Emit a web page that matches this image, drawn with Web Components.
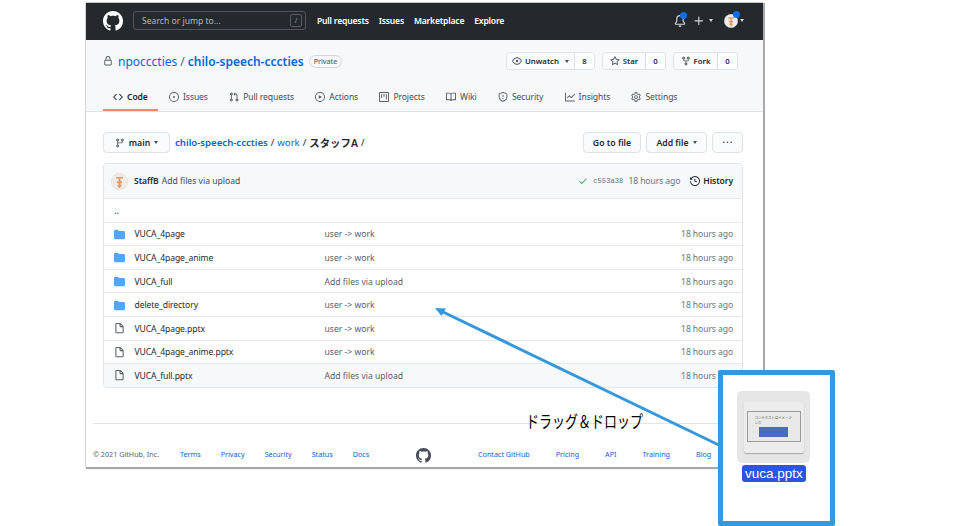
<!DOCTYPE html>
<html lang="ja">
<head>
<meta charset="utf-8">
<title>work / スタッフA</title>
<style>
  html, body { margin: 0; background: #fff; }
  body { width: 960px; height: 526px; overflow: hidden; position: relative; font-family: "Noto Sans", "Noto Sans CJK JP", sans-serif; }
</style>
</head>
<body>
<gh-window></gh-window>
<drag-arrow></drag-arrow>
<drag-card name="vuca.pptx"></drag-card>

<script>
const ICONS = {
  logo: 'M8 0C3.58 0 0 3.58 0 8c0 3.54 2.29 6.53 5.47 7.59.4.07.55-.17.55-.38 0-.19-.01-.82-.01-1.49-2.01.37-2.53-.49-2.69-.94-.09-.23-.48-.94-.82-1.13-.28-.15-.68-.52-.01-.53.63-.01 1.08.58 1.23.82.72 1.21 1.87.87 2.33.66.07-.52.28-.87.51-1.07-1.78-.2-3.64-.89-3.64-3.95 0-.87.31-1.59.82-2.15-.08-.2-.36-1.02.08-2.12 0 0 .67-.21 2.2.82.64-.18 1.32-.27 2-.27.68 0 1.36.09 2 .27 1.53-1.04 2.2-.82 2.2-.82.44 1.1.16 1.92.08 2.12.51.56.82 1.27.82 2.15 0 3.07-1.87 3.75-3.65 3.95.29.25.54.73.54 1.48 0 1.07-.01 1.93-.01 2.2 0 .21.15.46.55.38A8.013 8.013 0 0016 8c0-4.42-3.58-8-8-8z',
  folder: 'M1.75 1A1.75 1.75 0 000 2.75v10.5C0 14.216.784 15 1.75 15h12.5A1.75 1.75 0 0016 13.25v-8.5A1.75 1.75 0 0014.25 3H7.5a.25.25 0 01-.2-.1l-.9-1.2C6.07 1.26 5.55 1 5 1H1.75z',
  file: 'M3.75 1.5a.25.25 0 00-.25.25v11.5c0 .138.112.25.25.25h8.5a.25.25 0 00.25-.25V6H9.75A1.75 1.75 0 018 4.25V1.5H3.75zm5.75.56v2.19c0 .138.112.25.25.25h2.19L9.5 2.06zM2 1.75C2 .784 2.784 0 3.75 0h5.086c.464 0 .909.184 1.237.513l3.414 3.414c.329.328.513.773.513 1.237v8.086A1.75 1.75 0 0112.25 15h-8.5A1.75 1.75 0 012 13.25V1.75z',
  lock: 'M4 4v2h-.25A1.75 1.75 0 002 7.75v5.5c0 .966.784 1.75 1.75 1.75h8.5A1.75 1.75 0 0014 13.25v-5.5A1.75 1.75 0 0012.25 6H12V4a4 4 0 10-8 0zm6.5 2V4a2.5 2.5 0 00-5 0v2h5zM12 7.5h.25a.25.25 0 01.25.25v5.5a.25.25 0 01-.25.25h-8.5a.25.25 0 01-.25-.25v-5.5a.25.25 0 01.25-.25H12z',
  code: 'M4.72 3.22a.75.75 0 011.06 1.06L2.06 8l3.72 3.72a.75.75 0 11-1.06 1.06L.47 8.53a.75.75 0 010-1.06l4.25-4.25zm6.56 0a.75.75 0 10-1.06 1.06L13.94 8l-3.72 3.72a.75.75 0 101.06 1.06l4.25-4.25a.75.75 0 000-1.06l-4.25-4.25z',
  issue: 'M8 9.5a1.5 1.5 0 100-3 1.5 1.5 0 000 3z M8 0a8 8 0 100 16A8 8 0 008 0zM1.5 8a6.5 6.5 0 1113 0 6.5 6.5 0 01-13 0z',
  pull: 'M7.177 3.073L9.573.677A.25.25 0 0110 .854v4.792a.25.25 0 01-.427.177L7.177 3.427a.25.25 0 010-.354zM3.75 2.5a.75.75 0 100 1.5.75.75 0 000-1.5zm-2.25.75a2.25 2.25 0 113 2.122v5.256a2.251 2.251 0 11-1.5 0V5.372A2.25 2.25 0 011.5 3.25zM11 2.5h-1V4h1a1 1 0 011 1v5.628a2.251 2.251 0 101.5 0V5A2.5 2.5 0 0011 2.5zm1 10.25a.75.75 0 111.5 0 .75.75 0 01-1.5 0zM3.75 12a.75.75 0 100 1.5.75.75 0 000-1.5z',
  play: 'M1.5 8a6.5 6.5 0 1113 0 6.5 6.5 0 01-13 0zM8 0a8 8 0 100 16A8 8 0 008 0zM6.379 5.227A.25.25 0 006 5.442v5.117a.25.25 0 00.379.214l4.264-2.559a.25.25 0 000-.428L6.379 5.227z',
  project: 'M1.75 0A1.75 1.75 0 000 1.75v12.5C0 15.216.784 16 1.75 16h12.5A1.75 1.75 0 0016 14.25V1.75A1.75 1.75 0 0014.25 0H1.75zM1.5 1.75a.25.25 0 01.25-.25h12.5a.25.25 0 01.25.25v12.5a.25.25 0 01-.25.25H1.75a.25.25 0 01-.25-.25V1.75zM11.75 3a.75.75 0 00-.75.75v7.5a.75.75 0 001.5 0v-7.5a.75.75 0 00-.75-.75zm-8.25.75a.75.75 0 011.5 0v5.5a.75.75 0 01-1.5 0v-5.5zM8 3a.75.75 0 00-.75.75v3.5a.75.75 0 001.5 0v-3.5A.75.75 0 008 3z',
  book: 'M0 1.75A.75.75 0 01.75 1h4.253c1.227 0 2.317.59 3 1.501A3.744 3.744 0 0111.006 1h4.245a.75.75 0 01.75.75v10.5a.75.75 0 01-.75.75h-4.507a2.25 2.25 0 00-1.591.659l-.622.621a.75.75 0 01-1.06 0l-.622-.621A2.25 2.25 0 005.258 13H.75a.75.75 0 01-.75-.75V1.75zm8.755 3a2.25 2.25 0 012.25-2.25H14.5v9h-3.757c-.71 0-1.4.201-1.992.572l.004-7.322zm-1.504 7.324l.004-5.073-.002-2.253A2.25 2.25 0 005.003 2.5H1.5v9h3.757a3.75 3.75 0 011.994.574z',
  shield: 'M7.467.133a1.75 1.75 0 011.066 0l5.25 1.68A1.75 1.75 0 0115 3.48V7c0 1.566-.32 3.182-1.303 4.682-.983 1.498-2.585 2.813-5.032 3.855a1.7 1.7 0 01-1.33 0c-2.447-1.042-4.049-2.357-5.032-3.855C1.32 10.182 1 8.566 1 7V3.48a1.75 1.75 0 011.217-1.667l5.25-1.68zm.61 1.429a.25.25 0 00-.153 0l-5.25 1.68a.25.25 0 00-.174.238V7c0 1.358.275 2.666 1.057 3.86.784 1.194 2.121 2.34 4.366 3.297a.2.2 0 00.154 0c2.245-.956 3.582-2.104 4.366-3.298C13.225 9.666 13.5 8.36 13.5 7V3.48a.25.25 0 00-.174-.237l-5.25-1.68zM9 10.5a1 1 0 11-2 0 1 1 0 012 0zm-.25-5.75a.75.75 0 10-1.5 0v3a.75.75 0 001.5 0v-3z',
  graph: 'M1.5 1.75a.75.75 0 00-1.5 0v12.5c0 .414.336.75.75.75h14.5a.75.75 0 000-1.5H1.5V1.75zm14.28 2.53a.75.75 0 00-1.06-1.06L10 7.94 7.53 5.47a.75.75 0 00-1.06 0L3.22 8.72a.75.75 0 001.06 1.06L7 7.06l2.47 2.47a.75.75 0 001.06 0l5.25-5.25z',
  gear: 'M7.429 1.525a6.593 6.593 0 011.142 0c.036.003.108.036.137.146l.289 1.105c.147.56.55.967.997 1.189.174.086.341.183.501.29.417.278.97.423 1.53.27l1.102-.303c.11-.03.175.016.195.046.219.31.41.641.573.989.014.031.022.11-.059.19l-.815.806c-.411.406-.562.957-.53 1.456a4.588 4.588 0 010 .582c-.032.499.119 1.05.53 1.456l.815.806c.08.08.073.159.059.19a6.494 6.494 0 01-.573.99c-.02.029-.086.074-.195.045l-1.103-.303c-.559-.153-1.112-.008-1.529.27-.16.107-.327.204-.5.29-.449.222-.851.628-.998 1.189l-.289 1.105c-.029.11-.101.143-.137.146a6.613 6.613 0 01-1.142 0c-.036-.003-.108-.037-.137-.146l-.289-1.105c-.147-.56-.55-.967-.997-1.189a4.502 4.502 0 01-.501-.29c-.417-.278-.97-.423-1.53-.27l-1.102.303c-.11.03-.175-.016-.195-.046a6.492 6.492 0 01-.573-.989c-.014-.031-.022-.11.059-.19l.815-.806c.411-.406.562-.957.53-1.456a4.587 4.587 0 010-.582c.032-.499-.119-1.05-.53-1.456l-.815-.806c-.08-.08-.073-.159-.059-.19a6.44 6.44 0 01.573-.99c.02-.029.086-.075.195-.045l1.103.303c.559.153 1.112.008 1.529-.27.16-.107.327-.204.5-.29.449-.222.851-.628.998-1.189l.289-1.105c.029-.11.101-.143.137-.146zM8 0c-.236 0-.47.01-.701.03-.743.065-1.29.615-1.458 1.261l-.29 1.106c-.017.066-.078.158-.211.224a5.994 5.994 0 00-.668.386c-.123.082-.233.09-.3.071L3.27 2.776c-.644-.177-1.392.02-1.82.63a7.977 7.977 0 00-.704 1.217c-.315.675-.111 1.422.363 1.891l.815.806c.05.048.098.147.088.294a6.084 6.084 0 000 .772c.01.147-.038.246-.088.294l-.815.806c-.474.469-.678 1.216-.363 1.891.2.428.436.835.704 1.218.428.609 1.176.806 1.82.63l1.103-.303c.066-.019.176-.011.299.071.213.143.436.272.668.386.133.066.194.158.212.224l.289 1.106c.169.646.715 1.196 1.458 1.26a8.094 8.094 0 001.402 0c.743-.064 1.29-.614 1.458-1.26l.29-1.106c.017-.066.078-.158.211-.224a5.98 5.98 0 00.668-.386c.123-.082.233-.09.3-.071l1.102.302c.644.177 1.392-.02 1.82-.63.268-.382.505-.789.704-1.217.315-.675.111-1.422-.364-1.891l-.814-.806c-.05-.048-.098-.147-.088-.294a6.1 6.1 0 000-.772c-.01-.147.039-.246.088-.294l.814-.806c.475-.469.679-1.216.364-1.891a7.992 7.992 0 00-.704-1.218c-.428-.609-1.176-.806-1.82-.63l-1.103.303c-.066.019-.176.011-.299-.071a5.991 5.991 0 00-.668-.386c-.133-.066-.194-.158-.212-.224L10.16 1.29C9.99.645 9.444.095 8.701.031A8.094 8.094 0 008 0zm1.5 8a1.5 1.5 0 11-3 0 1.5 1.5 0 013 0zM11 8a3 3 0 11-6 0 3 3 0 016 0z',
  eye: 'M1.679 7.932c.412-.621 1.242-1.75 2.366-2.717C5.175 4.242 6.527 3.5 8 3.5c1.473 0 2.824.742 3.955 1.715 1.124.967 1.954 2.096 2.366 2.717a.119.119 0 010 .136c-.412.621-1.242 1.75-2.366 2.717C10.825 11.758 9.473 12.5 8 12.5c-1.473 0-2.824-.742-3.955-1.715C2.92 9.818 2.09 8.69 1.679 8.068a.119.119 0 010-.136zM8 2c-1.981 0-3.67.992-4.933 2.078C1.797 5.169.88 6.423.43 7.1a1.619 1.619 0 000 1.798c.45.678 1.367 1.932 2.637 3.024C4.329 13.008 6.019 14 8 14c1.981 0 3.67-.992 4.933-2.078 1.27-1.091 2.187-2.345 2.637-3.023a1.619 1.619 0 000-1.798c-.45-.678-1.367-1.932-2.637-3.023C11.671 2.992 9.981 2 8 2zm0 8a2 2 0 100-4 2 2 0 000 4z',
  star: 'M8 .25a.75.75 0 01.673.418l1.882 3.815 4.21.612a.75.75 0 01.416 1.279l-3.046 2.97.719 4.192a.75.75 0 01-1.088.791L8 12.347l-3.766 1.98a.75.75 0 01-1.088-.79l.72-4.194L.818 6.374a.75.75 0 01.416-1.28l4.21-.611L7.327.668A.75.75 0 018 .25zm0 2.445L6.615 5.5a.75.75 0 01-.564.41l-3.097.45 2.24 2.184a.75.75 0 01.216.664l-.528 3.084 2.769-1.456a.75.75 0 01.698 0l2.77 1.456-.53-3.084a.75.75 0 01.216-.664l2.24-2.183-3.096-.45a.75.75 0 01-.564-.41L8 2.694v.001z',
  fork: 'M5 3.25a.75.75 0 11-1.5 0 .75.75 0 011.5 0zm0 2.122a2.25 2.25 0 10-1.5 0v.878A2.25 2.25 0 005.75 8.5h1.5v2.128a2.251 2.251 0 101.5 0V8.5h1.5a2.25 2.25 0 002.25-2.25v-.878a2.25 2.25 0 10-1.5 0v.878a.75.75 0 01-.75.75h-4.5A.75.75 0 015 6.25v-.878zm3.75 7.378a.75.75 0 11-1.5 0 .75.75 0 011.5 0zm3-8.75a.75.75 0 100-1.5.75.75 0 000 1.5z',
  branch: 'M11.75 2.5a.75.75 0 100 1.5.75.75 0 000-1.5zm-2.25.75a2.25 2.25 0 113 2.122V6A2.5 2.5 0 0110 8.5H6a1 1 0 00-1 1v1.128a2.251 2.251 0 11-1.5 0V5.372a2.25 2.25 0 111.5 0v1.836A2.492 2.492 0 016 7h4a1 1 0 001-1v-.628A2.25 2.25 0 019.5 3.25zM4.25 12a.75.75 0 100 1.5.75.75 0 000-1.5zM3.5 3.25a.75.75 0 111.5 0 .75.75 0 01-1.5 0z',
  history: 'M1.643 3.143L.427 1.927A.25.25 0 000 2.104V5.75c0 .138.112.25.25.25h3.646a.25.25 0 00.177-.427L2.715 4.215a6.5 6.5 0 11-1.18 4.458.75.75 0 10-1.493.154 8.001 8.001 0 101.6-5.684zM7.75 4a.75.75 0 01.75.75v2.992l2.028.812a.75.75 0 01-.557 1.392l-2.5-1A.75.75 0 017 8.25v-3.5A.75.75 0 017.75 4z',
  check: 'M13.78 4.22a.75.75 0 010 1.06l-7.25 7.25a.75.75 0 01-1.06 0L2.22 9.28a.75.75 0 011.06-1.06L6 10.94l6.72-6.72a.75.75 0 011.06 0z',
  bell: 'M8 16a2 2 0 001.985-1.75c.017-.137-.097-.25-.235-.25h-3.5c-.138 0-.252.113-.235.25A2 2 0 008 16z M3 5a5 5 0 0110 0v2.947c0 .05.015.098.042.139l1.703 2.555A1.518 1.518 0 0113.482 13H2.518a1.518 1.518 0 01-1.263-2.36l1.703-2.554A.25.25 0 003 7.947V5zm5-3.5A3.5 3.5 0 004.5 5v2.947c0 .346-.102.683-.294.97l-1.703 2.556a.018.018 0 00-.003.01l.001.006c0 .002.002.004.004.006a.017.017 0 00.006.004l.007.001h10.964l.007-.001a.018.018 0 00.006-.004.016.016 0 00.004-.006l.001-.007a.017.017 0 00-.003-.01l-1.703-2.554a1.75 1.75 0 01-.294-.97V5A3.5 3.5 0 008 1.5z',
  plus: 'M7.75 2a.75.75 0 01.75.75V7h4.25a.75.75 0 010 1.5H8.5v4.25a.75.75 0 01-1.5 0V8.5H2.75a.75.75 0 010-1.5H7V2.75A.75.75 0 017.75 2z',
  kebab: 'M8 9a1.5 1.5 0 100-3 1.5 1.5 0 000 3zM1.5 9a1.5 1.5 0 100-3 1.5 1.5 0 000 3zm13 0a1.5 1.5 0 100-3 1.5 1.5 0 000 3z'
}

class GhIcon extends HTMLElement {
  connectedCallback () {
    const size = this.getAttribute('size') || 10
    const color = this.getAttribute('color') || 'currentColor'
    this.attachShadow({ mode: 'open' }).innerHTML = `
      <style>:host { display: inline-flex; flex: none; line-height: 0; } svg { display: block; }</style>
      <svg width="${size}" height="${size}" viewBox="0 0 16 16" fill="${color}" fill-rule="evenodd"><path d="${ICONS[this.getAttribute('name')]}"/></svg>`
  }
}
customElements.define('gh-icon', GhIcon)

class GhAvatar extends HTMLElement {
  connectedCallback () {
    const size = this.getAttribute('size') || 17
    this.attachShadow({ mode: 'open' }).innerHTML = `
      <style>:host { display: inline-flex; flex: none; line-height: 0; }</style>
      <svg width="${size}" height="${size}" viewBox="0 0 17 17">
        <circle cx="8.5" cy="8.5" r="8.2" fill="#f1ebe6" stroke="#dcd6d0" stroke-width=".5"/>
        <path d="M5 4h7v1.6H9.4v2.6H11v2H9.4v1.6h1.2v1.6H9.4V15H7.6v-1.6H6.4v-1.6h1.2v-1.6H6v-2h1.6V5.6H5z" fill="#dd9a6c"/>
      </svg>`
  }
}
customElements.define('gh-avatar', GhAvatar)

class TopBar extends HTMLElement {
  connectedCallback () {
    this.attachShadow({ mode: 'open' }).innerHTML = `
      <style>
        :host { display: flex; align-items: center; box-sizing: border-box; height: 37px; background: #24292e; color: #fff; padding: 0 19px 2px 17px; font-size: 8.6px; font-weight: 600; letter-spacing: -.2px; }
        .search { display: flex; align-items: center; justify-content: space-between; box-sizing: border-box; width: 173px; height: 19px; margin: 0 11px 0 10px; padding: 0 3px 0 8px; border: 1px solid #50565c; border-radius: 3px; color: #b5b9bd; font-weight: 400; letter-spacing: 0; }
        .key { display: flex; align-items: center; justify-content: center; width: 10px; height: 11px; border: 1px solid #555b61; border-radius: 2px; font-size: 7px; color: #959da5; }
        nav { display: flex; gap: 10px; }
        .right { margin-left: auto; display: flex; align-items: center; }
        .dotted { position: relative; display: inline-flex; }
        .dot { position: absolute; width: 7px; height: 7px; border-radius: 50%; background: #0d6fe8; }
        .caret { width: 0; height: 0; border: 2.5px solid transparent; border-top: 3px solid #d5d7d9; border-bottom: 0; margin-left: 4px; }
      </style>
      <gh-icon name="logo" size="20" color="#fff"></gh-icon>
      <div class="search"><span>Search or jump to...</span><span class="key">/</span></div>
      <nav><span>Pull requests</span><span>Issues</span><span>Marketplace</span><span>Explore</span></nav>
      <div class="right">
        <span class="dotted"><gh-icon name="bell" size="12" color="#d5d7d9"></gh-icon><span class="dot" style="left:6px;top:-3px"></span></span>
        <gh-icon name="plus" size="12" color="#d5d7d9" style="margin-left:7px"></gh-icon>
        <span class="caret"></span>
        <span class="dotted" style="margin-left:11px"><gh-avatar size="14"></gh-avatar><span class="dot" style="left:9px;top:-3px"></span></span>
        <span class="caret" style="margin-left:2px"></span>
      </div>`
  }
}
customElements.define('top-bar', TopBar)

class CountButton extends HTMLElement {
  connectedCallback () {
    const caret = this.hasAttribute('caret') ? '<span class="caret"></span>' : ''
    this.attachShadow({ mode: 'open' }).innerHTML = `
      <style>
        :host { display: flex; height: 18px; box-sizing: border-box; border: 1px solid #dfe2e5; border-radius: 4px; font-size: 7.8px; font-weight: 600; color: #24292e; overflow: hidden; }
        .label { display: flex; align-items: center; justify-content: center; gap: 3px; box-sizing: border-box; width: var(--label-w); background: #fafbfc; border-right: 1px solid #dfe2e5; }
        .count { display: flex; align-items: center; justify-content: center; width: 19px; background: #fff; }
        .caret { width: 0; height: 0; border: 2.5px solid transparent; border-top: 3px solid #444d56; border-bottom: 0; margin-left: 3px; }
      </style>
      <span class="label"><gh-icon name="${this.getAttribute('icon')}" size="10" color="#586069"></gh-icon><slot></slot>${caret}</span>
      <span class="count">${this.getAttribute('count')}</span>`
  }
}
customElements.define('count-button', CountButton)

class RepoTab extends HTMLElement {
  connectedCallback () {
    const on = this.hasAttribute('selected')
    this.attachShadow({ mode: 'open' }).innerHTML = `
      <style>
        :host { display: flex; align-items: center; gap: 4px; box-sizing: border-box; height: 26px; padding: 0 10px 1px; font-size: 8.6px; letter-spacing: -.1px; color: ${on ? '#24292e' : '#444d56'}; font-weight: ${on ? 600 : 400}; border-bottom: 2px solid ${on ? '#f9826c' : 'transparent'}; }
      </style>
      <gh-icon name="${this.getAttribute('icon')}" size="10" color="${on ? '#24292e' : '#586069'}"></gh-icon><slot></slot>`
  }
}
customElements.define('repo-tab', RepoTab)

class RepoHead extends HTMLElement {
  connectedCallback () {
    this.attachShadow({ mode: 'open' }).innerHTML = `
      <style>
        :host { display: block; box-sizing: border-box; height: 72px; padding: 12px 25px 0 17px; background: #f6f8fa; border-bottom: 1px solid #e1e4e8; }
        .top { display: flex; align-items: center; height: 18px; }
        .title { display: flex; align-items: center; font-size: 12px; color: #0366d6; }
        .sep { color: #586069; margin: 0 3px; }
        b { font-weight: 600; }
        .private { margin-left: 5px; padding: 0 4px; height: 13px; line-height: 12px; box-sizing: border-box; border: 1px solid #d3d8dd; border-radius: 7px; font-size: 7px; color: #586069; font-weight: 500; }
        .actions { margin-left: auto; display: flex; gap: 7px; }
        nav { display: flex; gap: 1.25px; margin-top: 15px; }
      </style>
      <div class="top">
        <gh-icon name="lock" size="10" color="#586069" style="margin-right:5px"></gh-icon>
        <div class="title"><span>npocccties</span><span class="sep">/</span><b>chilo-speech-cccties</b></div>
        <span class="private">Private</span>
        <div class="actions">
          <count-button icon="eye" count="8" caret style="--label-w:68px">Unwatch</count-button>
          <count-button icon="star" count="0" style="--label-w:43px">Star</count-button>
          <count-button icon="fork" count="0" style="--label-w:44px">Fork</count-button>
        </div>
      </div>
      <nav>
        <repo-tab icon="code" selected>Code</repo-tab>
        <repo-tab icon="issue">Issues</repo-tab>
        <repo-tab icon="pull">Pull requests</repo-tab>
        <repo-tab icon="play">Actions</repo-tab>
        <repo-tab icon="project">Projects</repo-tab>
        <repo-tab icon="book">Wiki</repo-tab>
        <repo-tab icon="shield">Security</repo-tab>
        <repo-tab icon="graph">Insights</repo-tab>
        <repo-tab icon="gear">Settings</repo-tab>
      </nav>`
  }
}
customElements.define('repo-head', RepoHead)

class PlainButton extends HTMLElement {
  connectedCallback () {
    this.attachShadow({ mode: 'open' }).innerHTML = `
      <style>
        :host { display: inline-flex; align-items: center; justify-content: center; gap: 4px; box-sizing: border-box; height: 21px; border: 1px solid #dfe2e5; border-radius: 4px; background: #fafbfc; font-size: 8.7px; font-weight: 600; color: #24292e; }
      </style>
      <slot></slot>`
  }
}
customElements.define('plain-button', PlainButton)

class FileNav extends HTMLElement {
  connectedCallback () {
    this.attachShadow({ mode: 'open' }).innerHTML = `
      <style>
        :host { display: flex; align-items: center; height: 21px; font-size: 9.6px; color: #24292e; }
        .crumbs { margin-left: 5px; display: flex; gap: 3px; align-items: center; }
        a { color: #0366d6; }
        .strong { font-weight: 600; }
        .jp { font-size: 10.4px; }
        .right { margin-left: auto; display: flex; gap: 5px; }
        .caret { display: inline-block; width: 0; height: 0; border: 2.5px solid transparent; border-top: 3px solid #444d56; border-bottom: 0; }
      </style>
      <plain-button style="width:67px"><gh-icon name="branch" size="10" color="#586069"></gh-icon>main<span class="caret"></span></plain-button>
      <div class="crumbs">
        <a class="strong">chilo-speech-cccties</a><span>/</span><a>work</a><span>/</span><span class="strong jp">スタッフA</span><span>/</span>
      </div>
      <div class="right">
        <plain-button style="width:58px">Go to file</plain-button>
        <plain-button style="width:61px">Add file<span class="caret"></span></plain-button>
        <plain-button style="width:31px"><gh-icon name="kebab" size="9" color="#444d56"></gh-icon></plain-button>
      </div>`
  }
}
customElements.define('file-nav', FileNav)

class FileRow extends HTMLElement {
  connectedCallback () {
    const type = this.getAttribute('type')
    const color = type === 'folder' ? '#55a5f5' : '#586069'
    this.attachShadow({ mode: 'open' }).innerHTML = `
      <style>
        :host { display: grid; grid-template-columns: 21px 190px 1fr auto; align-items: center; box-sizing: border-box; height: 23.6px; padding: 1px 9px 0 9.5px; border-top: 1px solid #e6e9ec; font-size: 8.6px; color: #24292e; background: #fff; }
        :host([shade]) { background: #f6f8fa; }
        .name { letter-spacing: -.1px; }
        .msg { color: #586069; }
        .age { color: #6a737d; letter-spacing: -.1px; }
      </style>
      <gh-icon name="${type}" size="11" color="${color}"></gh-icon>
      <span class="name"><slot></slot></span>
      <span class="msg">${this.getAttribute('msg')}</span>
      <span class="age">18 hours ago</span>`
  }
}
customElements.define('file-row', FileRow)

class FileTable extends HTMLElement {
  connectedCallback () {
    this.attachShadow({ mode: 'open' }).innerHTML = `
      <style>
        :host { display: block; margin-top: 10px; border: 1px solid #e1e4e8; border-radius: 4px; overflow: hidden; }
        .commit { display: flex; align-items: center; box-sizing: border-box; height: 34px; padding: 0 9px 0 7px; background: #f6f8fa; font-size: 8.6px; color: #444d56; }
        .commit b { margin: 0 3px 0 6px; color: #24292e; font-weight: 600; letter-spacing: -.1px; }
        .right { margin-left: auto; display: flex; align-items: center; color: #6a737d; }
        .hash { font-family: "Liberation Mono", monospace; font-size: 7.2px; margin: 0 5px 0 5px; }
        .age { letter-spacing: -.1px; }
        .history { display: flex; align-items: center; gap: 3px; margin-left: 10px; color: #24292e; font-weight: 600; letter-spacing: -.1px; }
        .up { display: flex; align-items: center; box-sizing: border-box; height: 23.6px; padding-left: 10px; border-top: 1px solid #e6e9ec; color: #0366d6; font-size: 9px; font-weight: 600; }
      </style>
      <div class="commit">
        <gh-avatar size="17"></gh-avatar>
        <b>StaffB</b><span>Add files via upload</span>
        <div class="right">
          <gh-icon name="check" size="10" color="#28a745"></gh-icon>
          <span class="hash">c553a38</span><span class="age">18 hours ago</span>
          <span class="history"><gh-icon name="history" size="10" color="#24292e"></gh-icon>History</span>
        </div>
      </div>
      <div class="up">..</div>
      <file-row type="folder" msg="user -> work">VUCA_4page</file-row>
      <file-row type="folder" msg="user -> work">VUCA_4page_anime</file-row>
      <file-row type="folder" msg="Add files via upload">VUCA_full</file-row>
      <file-row type="folder" msg="user -> work">delete_directory</file-row>
      <file-row type="file" msg="user -> work">VUCA_4page.pptx</file-row>
      <file-row type="file" msg="user -> work">VUCA_4page_anime.pptx</file-row>
      <file-row type="file" msg="Add files via upload" shade>VUCA_full.pptx</file-row>`
  }
}
customElements.define('file-table', FileTable)

class SiteFooter extends HTMLElement {
  connectedCallback () {
    this.attachShadow({ mode: 'open' }).innerHTML = `
      <style>
        :host { display: flex; align-items: center; box-sizing: border-box; height: 44px; margin: 35px 28px 0 7px; padding-top: 18px; border-top: 1px solid #e1e4e8; font-size: 7.2px; color: #0366d6; }
        .copy { color: #586069; width: 87px; }
        .left { display: flex; gap: 20px; width: 236px; }
        .right { display: flex; gap: 26px; margin-left: 47px; }
      </style>
      <span class="copy">© 2021 GitHub, Inc.</span>
      <div class="left"><span>Terms</span><span>Privacy</span><span>Security</span><span>Status</span><span>Docs</span></div>
      <gh-icon name="logo" size="15" color="#444d56" style="margin-top:3px"></gh-icon>
      <div class="right"><span>Contact GitHub</span><span>Pricing</span><span>API</span><span>Training</span><span>Blog</span></div>`
  }
}
customElements.define('site-footer', SiteFooter)

class GhWindow extends HTMLElement {
  connectedCallback () {
    this.attachShadow({ mode: 'open' }).innerHTML = `
      <style>
        :host { position: absolute; left: 86px; top: 3px; width: 677px; height: 464px; background: #fff; box-shadow: 0 -1px 0 #c9c9c9, 2px 0 0 #a9a9a9, 0 2px 1px #a9a9a9, -1px 0 0 #dcdcdc; }
        .main { padding: 20px 20px 0 17px; }
      </style>
      <top-bar></top-bar>
      <repo-head></repo-head>
      <div class="main"><file-nav></file-nav><file-table></file-table></div>
      <site-footer></site-footer>`
  }
}
customElements.define('gh-window', GhWindow)

class DragArrow extends HTMLElement {
  connectedCallback () {
    this.attachShadow({ mode: 'open' }).innerHTML = `
      <style>
        :host { position: absolute; inset: 0; display: block; pointer-events: none; }
        svg { position: absolute; left: 0; top: 0; }
        .label { position: absolute; left: 526px; top: 409px; font: 400 17px/24px "Noto Sans CJK JP", sans-serif; color: #000; white-space: nowrap; transform: scaleX(.765); transform-origin: left center; }
      </style>
      <svg width="960" height="526">
        <line x1="723" y1="447" x2="442" y2="311.5" stroke="#3498db" stroke-width="3"/>
        <polygon points="435,308 446,308.5 441.5,316" fill="#3498db"/>
      </svg>
      <span class="label">ドラッグ＆ドロップ</span>`
  }
}
customElements.define('drag-arrow', DragArrow)

class DragCard extends HTMLElement {
  connectedCallback () {
    this.attachShadow({ mode: 'open' }).innerHTML = `
      <style>
        :host { position: absolute; left: 718px; top: 370px; box-sizing: border-box; width: 117px; height: 156px; border: 5.5px solid #3498db; border-radius: 2px; background: #fff; display: flex; flex-direction: column; align-items: flex-start; padding: 16px 0 0 13.5px; }
        .tile { box-sizing: border-box; width: 73px; height: 72px; padding: 11px 6px 10px 7px; background: #e6e6e6; border-radius: 5px; }
        .slide { box-sizing: border-box; height: 51px; padding: 9px 3px; background: #ececec; border-radius: 2px; box-shadow: 0 1px 1px #a6a6a6; }
        .frame { box-sizing: border-box; height: 31px; padding: 4px 7px; border: 1.5px solid #9a9a9a; background: #e9e9e9; font: 3.4px/4.5px "Noto Sans CJK JP", sans-serif; color: #555; white-space: nowrap; }
        .go { width: 29px; height: 10px; margin: 2px 0 0 4px; background: #4a6cc0; }
        .name { margin: 2px 0 0 5px; padding: 0 3.5px; height: 17px; border-radius: 3px; background: #2b55e0; color: #fff; font: 500 13.5px/17px "Liberation Sans", sans-serif; }
      </style>
      <div class="tile"><div class="slide"><div class="frame">コンテクストはイメージ<br>ンス<div class="go"></div></div></div></div>
      <span class="name">${this.getAttribute('name')}</span>`
  }
}
customElements.define('drag-card', DragCard)
</script>
</body>
</html>
